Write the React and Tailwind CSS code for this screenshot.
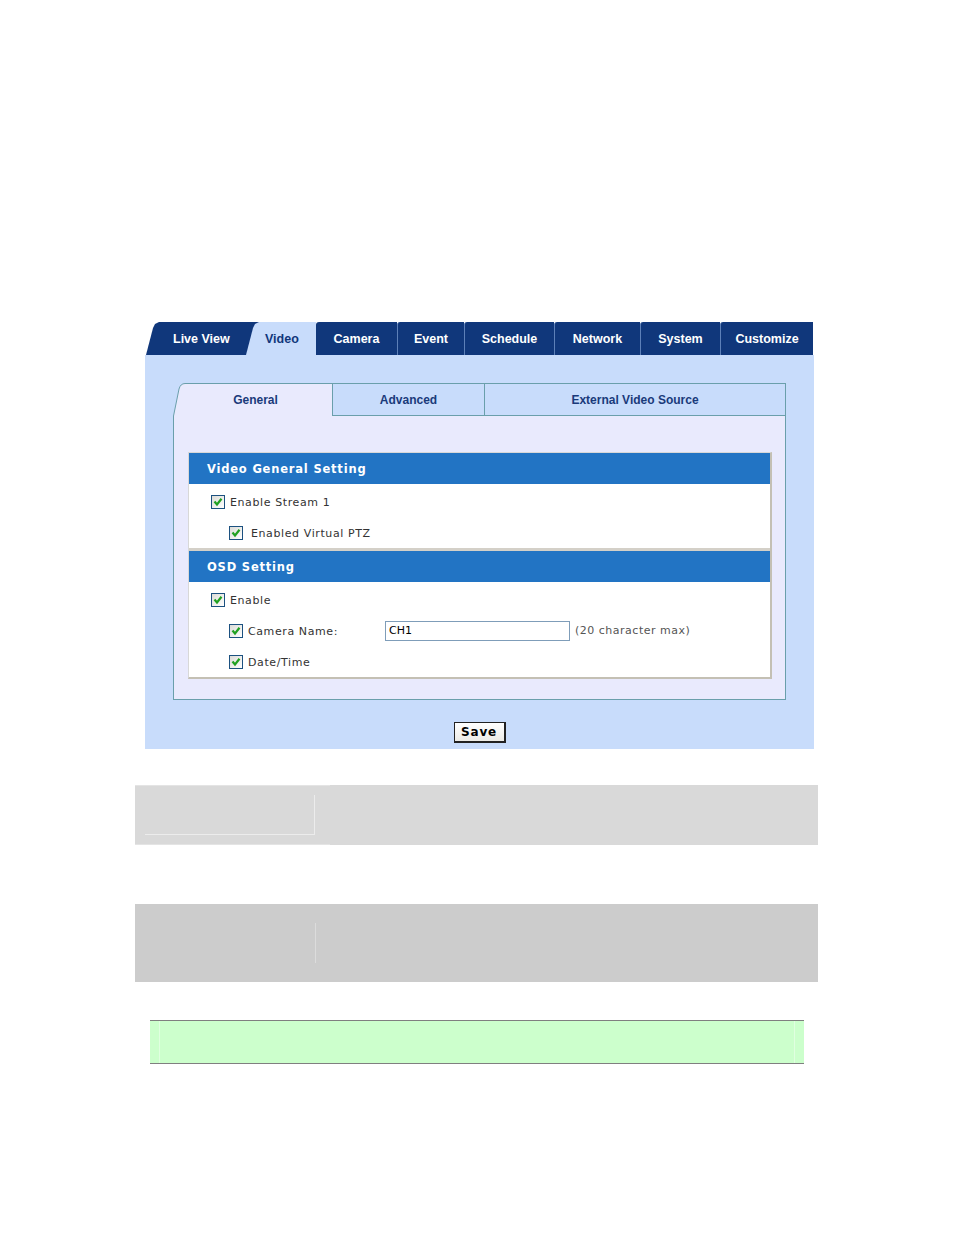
import { useState } from 'react';

const navy = 'bg-[#10377b]';

function Check({ checked, onChange }) {
  return (
    <button
      type="button"
      onClick={onChange}
      className="w-[14px] h-[14px] shrink-0 border border-[#1c5180] bg-gradient-to-br from-[#dcdcd7] to-white flex items-center justify-center"
    >
      {checked && (
        <svg width="10" height="10" viewBox="0 0 10 10">
          <path d="M1.5 4.5 L4 7.5 L8.5 1.8" fill="none" stroke="#21a121" strokeWidth="2.2" />
        </svg>
      )}
    </button>
  );
}

function Row({ indent, label, checked, onToggle, gap = 'gap-[5px]', children }) {
  return (
    <div className={`h-[31px] flex items-center ${indent ? 'pl-[40px]' : 'pl-[22px]'}`}>
      <div className={`flex items-center ${gap}`}>
        <Check checked={checked} onChange={onToggle} />
        <span className="mt-[4px] text-[11px] tracking-[0.6px] text-[#333]">{label}</span>
      </div>
      {children}
    </div>
  );
}

function SectionHeader({ title }) {
  return (
    <div className="h-[31px] bg-[#2274c4] flex items-center pt-[3px] pl-[18px] text-white font-bold text-[11.5px] tracking-[0.8px]">
      {title}
    </div>
  );
}

export default function App() {
  const [opts, setOpts] = useState({ stream1: true, ptz: true, osd: true, camName: true, dateTime: true });
  const [name, setName] = useState('CH1');
  const toggle = (k) => setOpts({ ...opts, [k]: !opts[k] });

  const tabs = ['Camera', 'Event', 'Schedule', 'Network', 'System', 'Customize'];
  const tabWidths = ['w-[81px]', 'w-[67px]', 'w-[90px]', 'w-[86px]', 'w-[80px]', 'w-[93px]'];

  return (
    <div className="min-h-[1235px] bg-white font-['DejaVu_Sans',sans-serif]">
      <div className="pt-[322px] pl-[145px]">
        <div className="w-[669px]">
          {/* main tabs */}
          <div className="flex h-[33px] font-['Liberation_Sans',sans-serif] font-bold text-[12.5px]">
            <div className={`relative w-[101px] ${navy} [clip-path:polygon(1px_100%,8px_6px,10px_2px,14px_0,100%_0,100%_100%)]`}>
              <span className="absolute inset-0 flex items-center pt-[2px] pl-[28px] text-white">Live View</span>
            </div>
            <div className={`relative w-[70px] ${navy}`}>
              <div className="absolute inset-0 bg-[#c8dcfb] [clip-path:polygon(0_100%,7px_6px,9px_2px,13px_0,100%_0,100%_100%)]" />
              <span className="absolute inset-0 flex items-center pt-[2px] pl-[19px] text-[#10377b]">Video</span>
            </div>
            {tabs.map((t, i) => (
              <div
                key={t}
                className={`${tabWidths[i]} ${navy} ${i > 0 ? 'border-l border-[#5d80b8]' : ''} rounded-tl-[3px] flex items-center justify-center pt-[2px] text-white`}
              >
                {t}
              </div>
            ))}
          </div>

          {/* panel body */}
          <div className="bg-[#c8dcfb] pt-[28px] px-[28px] pb-[6px]">
            <div className="flex h-[33px] text-[12px] font-bold text-[#1a3a7a] font-['Liberation_Sans',sans-serif]">
              <div className="relative w-[159px]">
                <svg className="absolute inset-0" width="159" height="33" viewBox="0 0 159 33">
                  <path d="M0.5 33 L6 6 Q7.5 0.5 12 0.5 L159 0.5 L159 33 Z" fill="#e9eafd" />
                  <path d="M0.5 33 L6 6 Q7.5 0.5 12 0.5 L159 0.5" fill="none" stroke="#6a9fab" strokeWidth="1" />
                </svg>
                <span className="relative h-full flex items-center justify-center pl-[6px]">General</span>
              </div>
              <div className="w-[152px] border border-r-0 border-[#6a9fab] flex items-center justify-center">Advanced</div>
              <div className="flex-1 border border-[#6a9fab] flex items-center justify-center">External Video Source</div>
            </div>

            <div className="h-[284px] bg-[#e9eafd] border border-t-0 border-[#6a9fab] pt-[36px] pl-[14px] pr-[13px]">
              <div className="bg-white border-t border-l border-[#d8d8d8] border-r-2 border-b-2 border-r-[#c4c0b4] border-b-[#c4c0b4]">
                <SectionHeader title="Video General Setting" />
                <div className="pt-[2px]">
                  <Row label="Enable Stream 1" checked={opts.stream1} onToggle={() => toggle('stream1')} />
                  <Row indent gap="gap-[8px]" label="Enabled Virtual PTZ" checked={opts.ptz} onToggle={() => toggle('ptz')} />
                </div>
                <div className="h-[3px] bg-[#d4d0c8]" />
                <SectionHeader title="OSD Setting" />
                <div className="pt-[2px]">
                  <Row label="Enable" checked={opts.osd} onToggle={() => toggle('osd')} />
                  <Row label="Camera Name:" indent checked={opts.camName} onToggle={() => toggle('camName')}>
                    <input
                      value={name}
                      onChange={(e) => setName(e.target.value)}
                      maxLength={20}
                      className="ml-[47px] w-[185px] h-[20px] border border-[#7f9db9] px-[3px] text-[11px] text-black outline-none"
                    />
                    <span className="ml-[5px] mt-[2px] text-[11px] tracking-[0.5px] text-[#555]">(20 character max)</span>
                  </Row>
                  <Row label="Date/Time" indent checked={opts.dateTime} onToggle={() => toggle('dateTime')} />
                </div>
              </div>
            </div>

            <div className="flex justify-center pt-[22px]">
              <button className="w-[52px] h-[21px] border border-[#222] border-r-2 border-b-2 bg-gradient-to-b from-white to-[#ecebe6] text-[12px] font-bold tracking-[0.8px] text-black">
                Save
              </button>
            </div>
          </div>
        </div>
      </div>

      {/* grey placeholders */}
      <div className="pl-[135px] pt-[36px]">
        <div className="w-[683px] h-[60px] bg-[#d9d9d9] flex">
          <div className="w-[195px] border-t border-b border-[#e4e4e4] pl-[10px] pt-[9px]">
            <div className="w-[170px] h-[40px] border-r border-b border-[#ececec]" />
          </div>
        </div>
        <div className="h-[59px]" />
        <div className="w-[683px] h-[78px] bg-[#cccccc] flex items-center">
          <div className="ml-[180px] w-px h-[40px] bg-[#dcdcdc]" />
        </div>
      </div>
      <div className="pl-[150px] pt-[38px]">
        <div className="w-[654px] h-[44px] bg-[#ccffcc] border-t border-b border-[#7f7f7f] flex justify-between px-[9px]">
          <div className="w-px bg-[#e0ffe0]" />
          <div className="w-px bg-[#e0ffe0]" />
        </div>
      </div>
    </div>
  );
}
